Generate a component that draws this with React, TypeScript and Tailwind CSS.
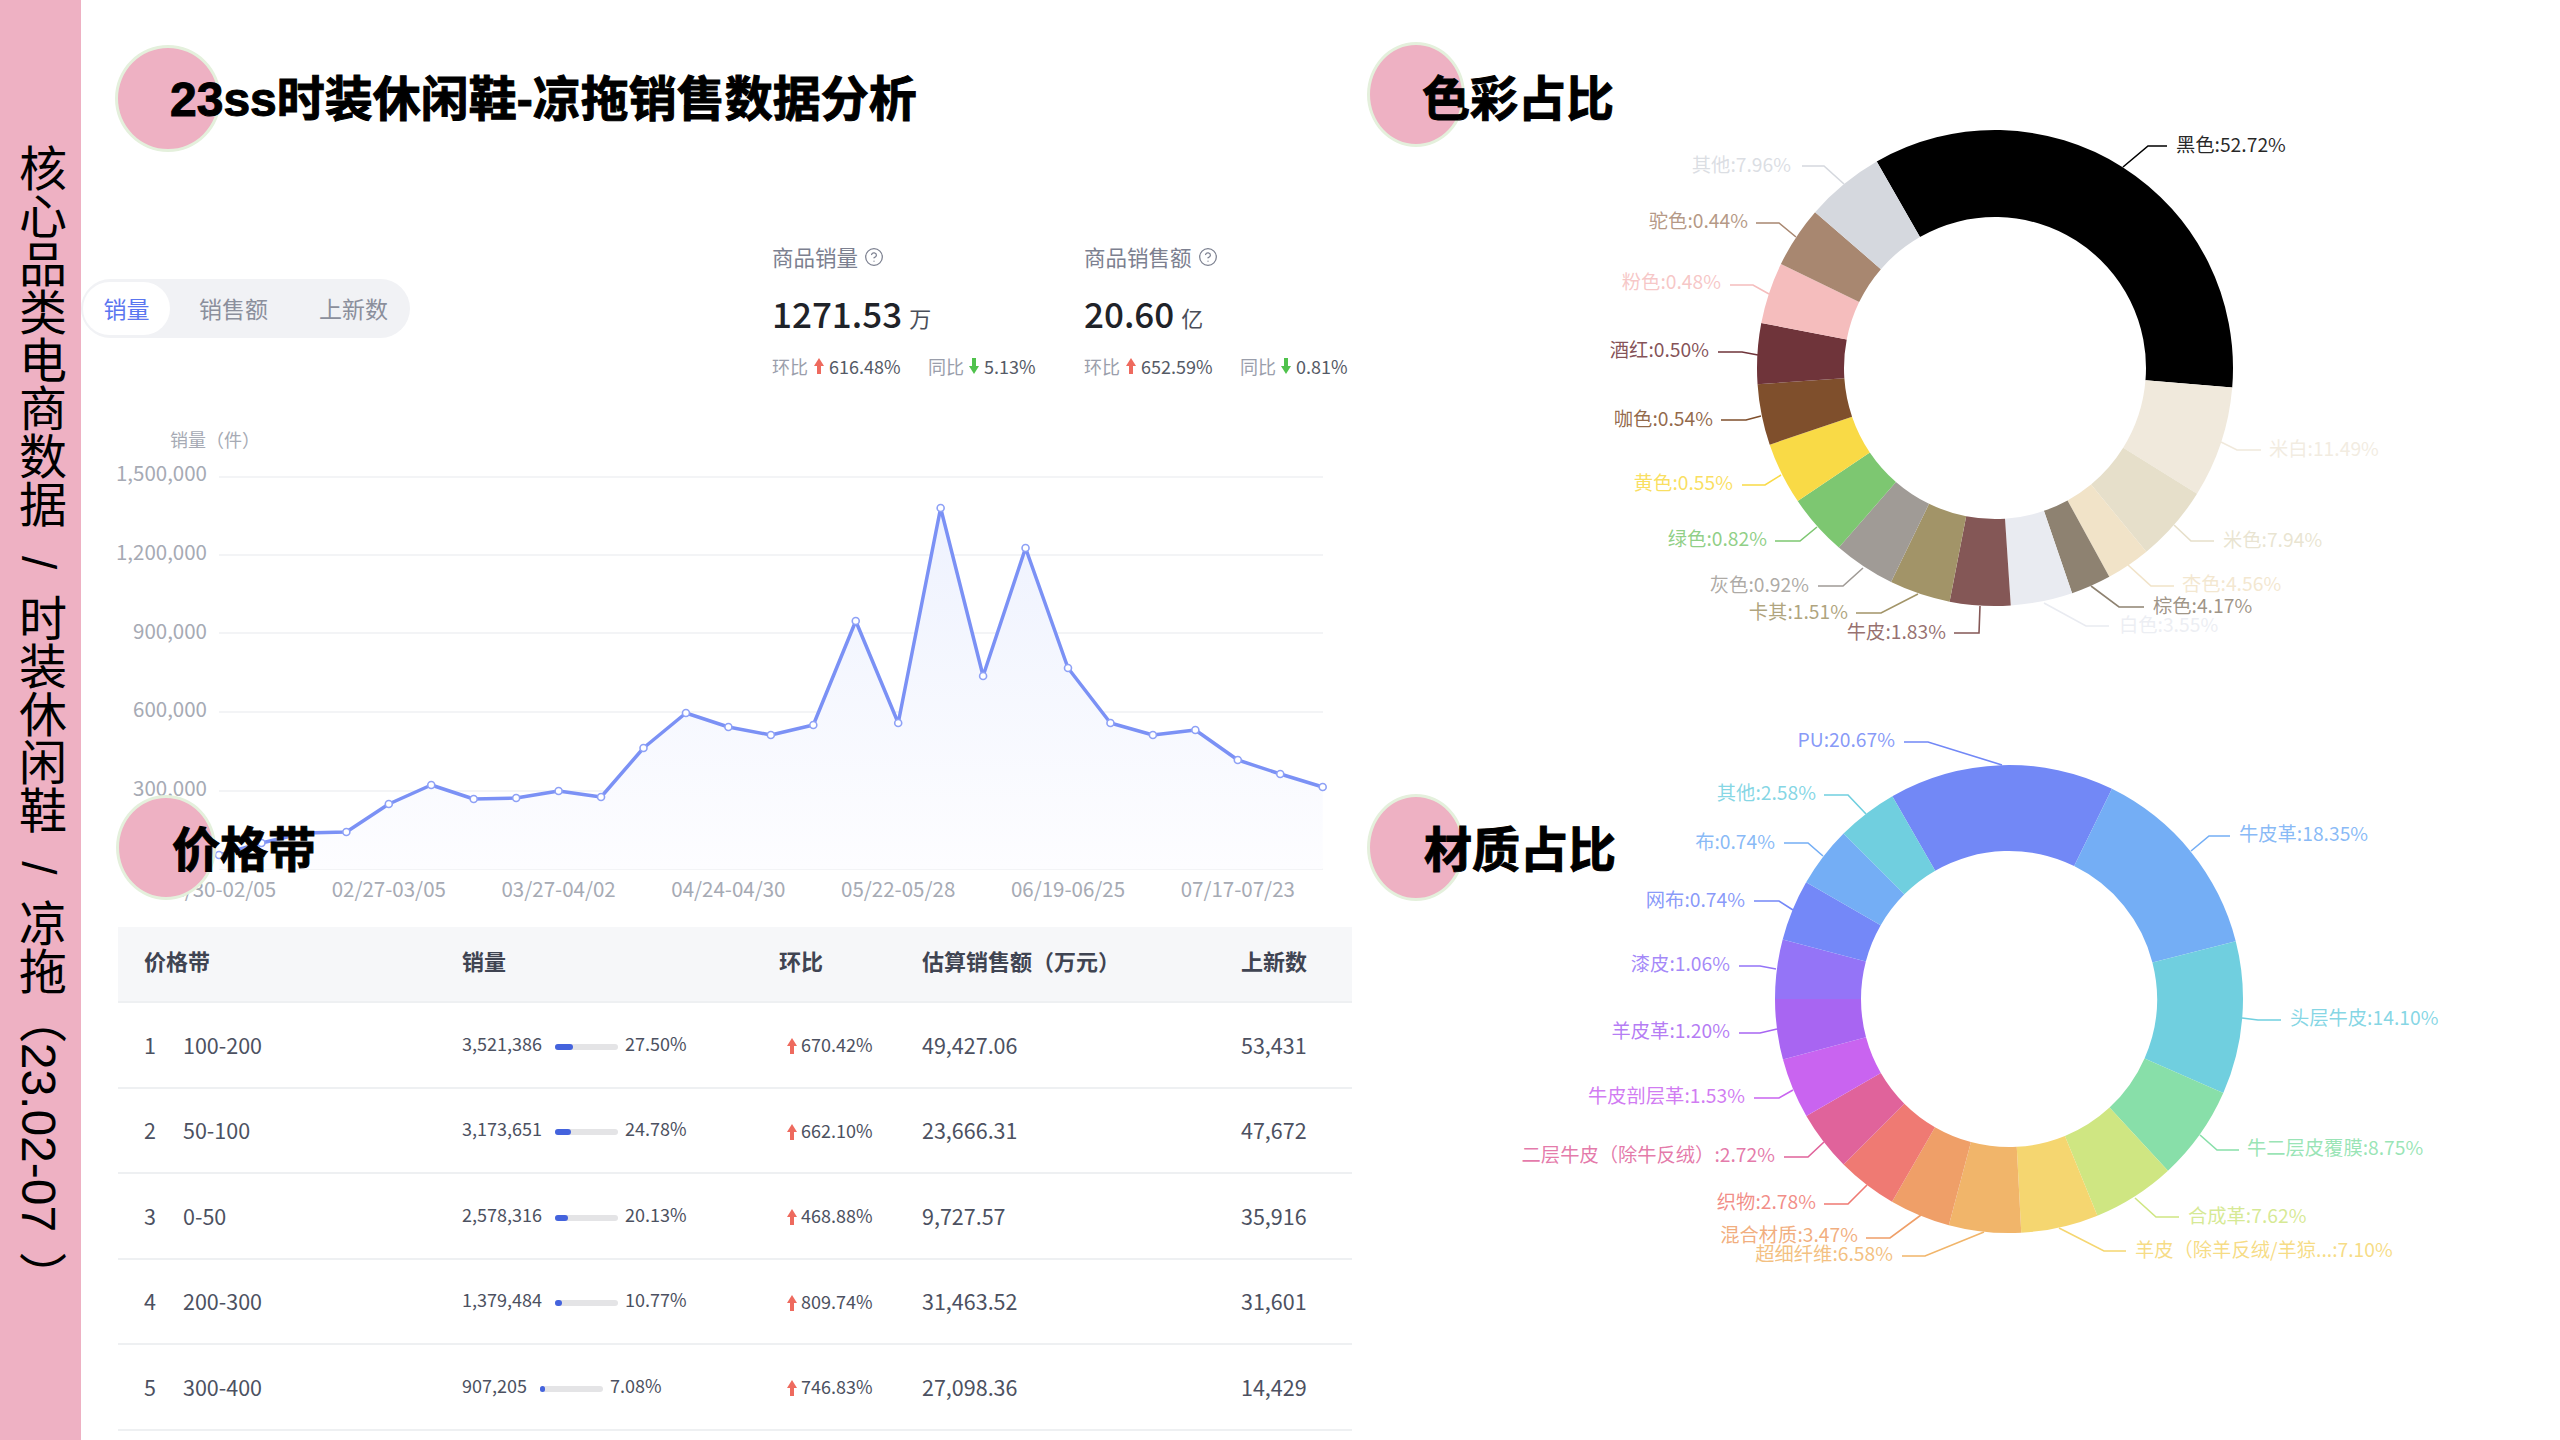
import React from 'react';
import { CircleHelp } from 'lucide-react';

type Pt = [number, number];
interface Label {
  text: string;
  x: number;
  y: number;
  anchor: 'start' | 'end';
  line: Pt[];
}
interface Slice {
  color: string;
  end: number;
  label: Label;
}

const polar = (cx: number, cy: number, r: number, deg: number) => {
  const a = (deg * Math.PI) / 180;
  return [cx + r * Math.sin(a), cy - r * Math.cos(a)].map(n => n.toFixed(2)).join(' ');
};

const arc = (cx: number, cy: number, R: number, r: number, from: number, to: number) => {
  const big = to - from > 180 ? 1 : 0;
  return `M${polar(cx, cy, R, from)}A${R} ${R} 0 ${big} 1 ${polar(cx, cy, R, to)}L${polar(cx, cy, r, to)}A${r} ${r} 0 ${big} 0 ${polar(cx, cy, r, from)}Z`;
};

const l = (text: string, x: number, y: number, anchor: 'start' | 'end', ...line: Pt[]): Label => ({ text, x, y, anchor, line });

const colorSlices: Slice[] = [
  { color: '#000000', end: 94.7, label: l('黑色:52.72%', 2176, 144, 'start', [2123, 167], [2148, 146], [2167, 146]) },
  { color: '#f0e9dc', end: 121.9, label: l('米白:11.49%', 2269, 448, 'start', [2221, 442], [2237, 450], [2261, 450]) },
  { color: '#e6dfca', end: 140.5, label: l('米色:7.94%', 2223, 539, 'start', [2174, 525], [2191, 541], [2214, 541]) },
  { color: '#f1e3c8', end: 151.3, label: l('杏色:4.56%', 2182, 583, 'start', [2128, 565], [2151, 586], [2174, 586]) },
  { color: '#8e8271', end: 161.1, label: l('棕色:4.17%', 2153, 605, 'start', [2091, 586], [2119, 607], [2144, 607]) },
  { color: '#e9ebf1', end: 176.2, label: l('白色:3.55%', 2119, 624, 'start', [2044, 603], [2086, 626], [2109, 626]) },
  { color: '#845756', end: 191, label: l('牛皮:1.83%', 1946, 631, 'end', [1954, 633], [1979, 633], [1980, 606]) },
  { color: '#a29468', end: 205.9, label: l('卡其:1.51%', 1848, 611, 'end', [1856, 613], [1881, 613], [1918, 594]) },
  { color: '#a09b96', end: 221, label: l('灰色:0.92%', 1809, 584, 'end', [1818, 586], [1843, 586], [1863, 568]) },
  { color: '#7dc771', end: 236, label: l('绿色:0.82%', 1767, 538, 'end', [1775, 541], [1800, 541], [1817, 527]) },
  { color: '#f9da46', end: 251.2, label: l('黄色:0.55%', 1733, 482, 'end', [1742, 485], [1765, 485], [1781, 475]) },
  { color: '#7f4f2c', end: 266.1, label: l('咖色:0.54%', 1713, 418, 'end', [1721, 420], [1746, 420], [1761, 416]) },
  { color: '#6f343a', end: 280.9, label: l('酒红:0.50%', 1709, 349, 'end', [1718, 352], [1742, 352], [1758, 355]) },
  { color: '#f5bdbd', end: 295.9, label: l('粉色:0.48%', 1721, 281, 'end', [1730, 285], [1753, 285], [1769, 294]) },
  { color: '#a88770', end: 310.9, label: l('驼色:0.44%', 1748, 220, 'end', [1756, 223], [1779, 223], [1796, 237]) },
  { color: '#d5d8de', end: 330.2, label: l('其他:7.96%', 1791, 164, 'end', [1802, 166], [1824, 166], [1844, 184]) },
];

const materialSlices: Slice[] = [
  { color: '#7288f6', end: 26.1, label: l('PU:20.67%', 1895, 739, 'end', [1904, 742], [1928, 742], [2002, 765]) },
  { color: '#74aef5', end: 75.7, label: l('牛皮革:18.35%', 2239, 833, 'start', [2191, 851], [2209, 836], [2230, 836]) },
  { color: '#70cfdf', end: 113.7, label: l('头层牛皮:14.10%', 2290, 1017, 'start', [2242, 1018], [2258, 1020], [2281, 1020]) },
  { color: '#88dfa9', end: 137.2, label: l('牛二层皮覆膜:8.75%', 2247, 1147, 'start', [2200, 1135], [2217, 1150], [2239, 1150]) },
  { color: '#cfe682', end: 157.8, label: l('合成革:7.62%', 2188, 1215, 'start', [2135, 1198], [2156, 1217], [2179, 1217]) },
  { color: '#f5d670', end: 177, label: l('羊皮（除羊反绒/羊猄...:7.10%', 2135, 1249, 'start', [2059, 1228], [2104, 1251], [2126, 1251]) },
  { color: '#f1b56a', end: 194.9, label: l('超细纤维:6.58%', 1893, 1253, 'end', [1902, 1256], [1925, 1256], [1984, 1232]) },
  { color: '#ef9f68', end: 210, label: l('混合材质:3.47%', 1858, 1234, 'end', [1866, 1238], [1890, 1238], [1921, 1215]) },
  { color: '#ef7a73', end: 225, label: l('织物:2.78%', 1816, 1201, 'end', [1824, 1204], [1848, 1204], [1867, 1185]) },
  { color: '#e0639b', end: 240, label: l('二层牛皮（除牛反绒）:2.72%', 1775, 1154, 'end', [1784, 1157], [1808, 1157], [1824, 1142]) },
  { color: '#c964f0', end: 255, label: l('牛皮剖层革:1.53%', 1745, 1095, 'end', [1754, 1098], [1779, 1098], [1793, 1090]) },
  { color: '#a865f2', end: 270, label: l('羊皮革:1.20%', 1730, 1030, 'end', [1739, 1033], [1760, 1033], [1777, 1029]) },
  { color: '#9474f7', end: 284.7, label: l('漆皮:1.06%', 1730, 963, 'end', [1739, 966], [1760, 966], [1776, 969]) },
  { color: '#7488f8', end: 299.9, label: l('网布:0.74%', 1745, 899, 'end', [1754, 901], [1779, 901], [1793, 910]) },
  { color: '#74aef5', end: 315, label: l('布:0.74%', 1775, 841, 'end', [1784, 843], [1808, 843], [1823, 856]) },
  { color: '#70cfdf', end: 330.1, label: l('其他:2.58%', 1816, 792, 'end', [1824, 795], [1848, 795], [1866, 814]) },
];

const Donut = ({ slices, cx, cy, R, r, start, viewBox, className }: {
  slices: Slice[]; cx: number; cy: number; R: number; r: number; start: number; viewBox: string; className: string;
}) => {
  let from = start;
  return (
    <svg viewBox={viewBox} className={className}>
      {slices.map(s => {
        const d = arc(cx, cy, R, r, from, s.end);
        from = s.end;
        return (
          <g key={s.label.text}>
            <path d={d} fill={s.color} />
            <polyline points={s.label.line.map(p => p.join(',')).join(' ')} fill="none" stroke={s.color} strokeWidth="1.6" />
            <text x={s.label.x} y={s.label.y} textAnchor={s.label.anchor} dominantBaseline="central" fill={s.color} fillOpacity="0.85" fontSize="19.3">
              {s.label.text}
            </text>
          </g>
        );
      })}
    </svg>
  );
};

const chartY = [855, 843, 833, 832, 804, 785, 799, 798, 791, 797, 748, 713, 727, 735, 725, 621, 723, 508, 676, 548, 668, 723, 735, 730, 760, 774, 787];
const chartPts = chartY.map((y, i) => [219 + i * 42.45, y]);
const linePts = chartPts.map(p => p.join(',')).join(' ');

const SalesChart = () => (
  <svg viewBox="81 420 1271 490" className="block h-[490px] w-[1271px]">
    <defs>
      <linearGradient id="area" x1="0" y1="0" x2="0" y2="1">
        <stop offset="0" stopColor="#eef2fe" />
        <stop offset="1" stopColor="#fdfdff" />
      </linearGradient>
    </defs>
    <text x="170" y="439" dominantBaseline="central" fontSize="18" fill="#a6aab4">销量（件）</text>
    {[477, 555, 633, 712, 791, 869].map(y => (
      <line key={y} x1="219" x2="1323" y1={y} y2={y} stroke="#f3f4f6" strokeWidth="2" />
    ))}
    {[['1,500,000', 472], ['1,200,000', 551], ['900,000', 630], ['600,000', 708], ['300,000', 787]].map(([t, y]) => (
      <text key={t} x="207" y={y} textAnchor="end" dominantBaseline="central" fontSize="20.5" fill="#a6aab4">{t}</text>
    ))}
    <polygon points={`219,869 ${linePts} 1322.7,869`} fill="url(#area)" />
    <polyline points={linePts} fill="none" stroke="#7b91f5" strokeWidth="3.5" strokeLinejoin="round" />
    {chartPts.map(([x, y]) => (
      <circle key={x} cx={x} cy={y} r="3.5" fill="#ffffff" stroke="#8ea1f6" strokeWidth="1.6" />
    ))}
    {[['01/30-02/05', 0], ['02/27-03/05', 4], ['03/27-04/02', 8], ['04/24-04/30', 12], ['05/22-05/28', 16], ['06/19-06/25', 20], ['07/17-07/23', 24]].map(([t, i]) => (
      <text key={t} x={219 + (i as number) * 42.45} y="888" textAnchor="middle" dominantBaseline="central" fontSize="20.5" fill="#a6aab4">{t}</text>
    ))}
  </svg>
);

const ArrowUp = ({ className }: { className: string }) => (
  <svg viewBox="0 0 10 16" className={className}><path d="M5 0L10 8H7V16H3V8H0Z" fill="#ee6a5e" /></svg>
);

const ArrowDown = ({ className }: { className: string }) => (
  <svg viewBox="0 0 10 16" className={className}><path d="M3 0H7V8H10L5 16L0 8H3Z" fill="#4fc24c" /></svg>
);

const Heading = ({ title, circle, overlap }: { title: string; circle: string; overlap: string }) => (
  <div className="flex items-center">
    <div className={`shrink-0 rounded-[50%] border-[3px] border-[#e4f0dc] bg-[#eeb1c3] ${circle}`} />
    <h1 className={`relative shrink-0 whitespace-nowrap font-['Liberation_Sans','Noto_Sans_CJK_SC',sans-serif] text-[48px] font-bold leading-[56px] text-black [-webkit-text-stroke:1px_#000] ${overlap}`}>
      {title}
    </h1>
  </div>
);

const Stat = ({ label, value, unit, hb, tb, width }: { label: string; value: string; unit: string; hb: string; tb: string; width: string }) => (
  <div className={width}>
    <div className="flex h-[24px] items-center text-[21.5px] text-[#7c8090]">
      {label}
      <CircleHelp size={20} strokeWidth={1.5} className="ml-[6px]" />
    </div>
    <div className="mt-[24px] flex h-[40px] items-center">
      <span className="text-[35px] font-medium leading-[40px] text-[#1f2329]">{value}</span>
      <span className="ml-[7px] mt-[8px] text-[22px] leading-[26px] text-[#4a4e59]">{unit}</span>
    </div>
    <div className="mt-[23px] flex h-[20px] items-center text-[18px] leading-[20px]">
      <span className="text-[#9a9eab]">环比</span>
      <ArrowUp className="ml-[6px] h-[16px] w-[10px]" />
      <span className="ml-[5px] w-[99px] text-[#555a66]">{hb}</span>
      <span className="text-[#9a9eab]">同比</span>
      <ArrowDown className="ml-[5px] h-[16px] w-[10px]" />
      <span className="ml-[5px] text-[#555a66]">{tb}</span>
    </div>
  </div>
);

const rows = [
  { rank: 1, band: '100-200', sales: '3,521,386', fill: 18, share: '27.50%', hb: '670.42%', amount: '49,427.06', news: '53,431' },
  { rank: 2, band: '50-100', sales: '3,173,651', fill: 16, share: '24.78%', hb: '662.10%', amount: '23,666.31', news: '47,672' },
  { rank: 3, band: '0-50', sales: '2,578,316', fill: 13, share: '20.13%', hb: '468.88%', amount: '9,727.57', news: '35,916' },
  { rank: 4, band: '200-300', sales: '1,379,484', fill: 7, share: '10.77%', hb: '809.74%', amount: '31,463.52', news: '31,601' },
  { rank: 5, band: '300-400', sales: '907,205', fill: 5, share: '7.08%', hb: '746.83%', amount: '27,098.36', news: '14,429' },
];

const PriceTable = () => (
  <div className="ml-[37px] mt-[27px] w-[1234px]">
    <div className="grid h-[76px] grid-cols-[318px_317px_143px_319px_111px] items-center border-b-2 border-[#eef0f2] bg-[#f6f7f9] pb-[8px] pl-[26px] text-[22px] font-bold text-[#3f4452]">
      <div>价格带</div>
      <div>销量</div>
      <div>环比</div>
      <div>估算销售额（万元）</div>
      <div>上新数</div>
    </div>
    {rows.map(row => (
      <div key={row.rank} className="grid h-[85.5px] grid-cols-[318px_317px_143px_319px_111px] items-center border-b-2 border-[#eef0f2] pl-[26px] text-[21.5px] text-[#4c5161]">
        <div className="flex">
          <span className="w-[39px]">{row.rank}</span>
          <span>{row.band}</span>
        </div>
        <div className="flex items-center text-[18px] leading-[24px]">
          <span className="-mt-[4px]">{row.sales}</span>
          <div className="ml-[13px] mt-[4px] h-[6px] w-[63px] rounded-full bg-[#e4e4e6]">
            <div className="h-full rounded-full bg-[#4463dd]" style={{ width: row.fill }} />
          </div>
          <span className="-mt-[4px] ml-[7px]">{row.share}</span>
        </div>
        <div className="flex items-center pl-[8px] text-[18px]">
          <ArrowUp className="mt-[3px] h-[16px] w-[10px]" />
          <span className="ml-[4px]">{row.hb}</span>
        </div>
        <div>{row.amount}</div>
        <div>{row.news}</div>
      </div>
    ))}
  </div>
);

const App = () => (
  <div className="flex h-[1440px] w-[2560px] overflow-hidden bg-white font-['Noto_Sans_CJK_SC',sans-serif]">
    <aside className="w-[81px] shrink-0 bg-[#eeb1c3] pt-[144px]">
      <div className="ml-[13px] whitespace-nowrap font-['Liberation_Sans','Noto_Sans_CJK_SC',sans-serif] text-[48px] leading-[50px] text-black [writing-mode:vertical-rl]">
        核心品类电商数据{'\u2002\u200a/\u2002'}时装休闲鞋{'\u2002\u200a/\u2002'}凉拖（23.02-07{'\u2009\u2009'}）
      </div>
    </aside>

    <main className="w-[1271px] shrink-0 pt-[45px]">
      <div className="pl-[34px]">
        <Heading title="23ss时装休闲鞋-凉拖销售数据分析" circle="h-[107px] w-[106px]" overlap="-ml-[51px] mt-[2px]" />
      </div>

      <div className="mt-[93px] flex items-start">
        <div className="mt-[34px] flex h-[59px] w-[329px] shrink-0 items-center rounded-full bg-[#f1f2f5] pl-[2px] text-[23px] text-[#8b8f9c]">
          <div className="flex h-[53px] w-[87px] items-center justify-center rounded-full bg-white text-[#5b76f0]">销量</div>
          <div className="ml-[29px]">销售额</div>
          <div className="ml-[51px]">上新数</div>
        </div>
        <div className="ml-[362px] flex">
          <Stat label="商品销量" value="1271.53" unit="万" hb="616.48%" tb="5.13%" width="w-[312px]" />
          <Stat label="商品销售额" value="20.60" unit="亿" hb="652.59%" tb="0.81%" width="w-[267px]" />
        </div>
      </div>

      <div className="mt-[44px]">
        <SalesChart />
      </div>

      <div className="relative -mt-[115px] pl-[35px]">
        <Heading title="价格带" circle="h-[105px] w-[100px]" overlap="-ml-[44px] mt-[7px]" />
      </div>

      <PriceTable />
    </main>

    <section className="min-w-0 flex-1 pt-[42px]">
      <div className="pl-[15px]">
        <Heading title="色彩占比" circle="h-[105px] w-[98px]" overlap="-ml-[43px] mt-[10px]" />
      </div>
      <div className="-mt-[27px]">
        <Donut slices={colorSlices} cx={1995} cy={368} R={238} r={151} start={-29.8} viewBox="1352 120 1208 560" className="block h-[560px] w-[1208px]" />
      </div>
      <div className="mt-[114px] pl-[15px]">
        <Heading title="材质占比" circle="h-[107px] w-[98px]" overlap="-ml-[41px] mt-[7px]" />
      </div>
      <div className="-mt-[181px]">
        <Donut slices={materialSlices} cx={2009} cy={999} R={234} r={148} start={-29.9} viewBox="1352 720 1208 570" className="block h-[570px] w-[1208px]" />
      </div>
    </section>
  </div>
);

export default App;
